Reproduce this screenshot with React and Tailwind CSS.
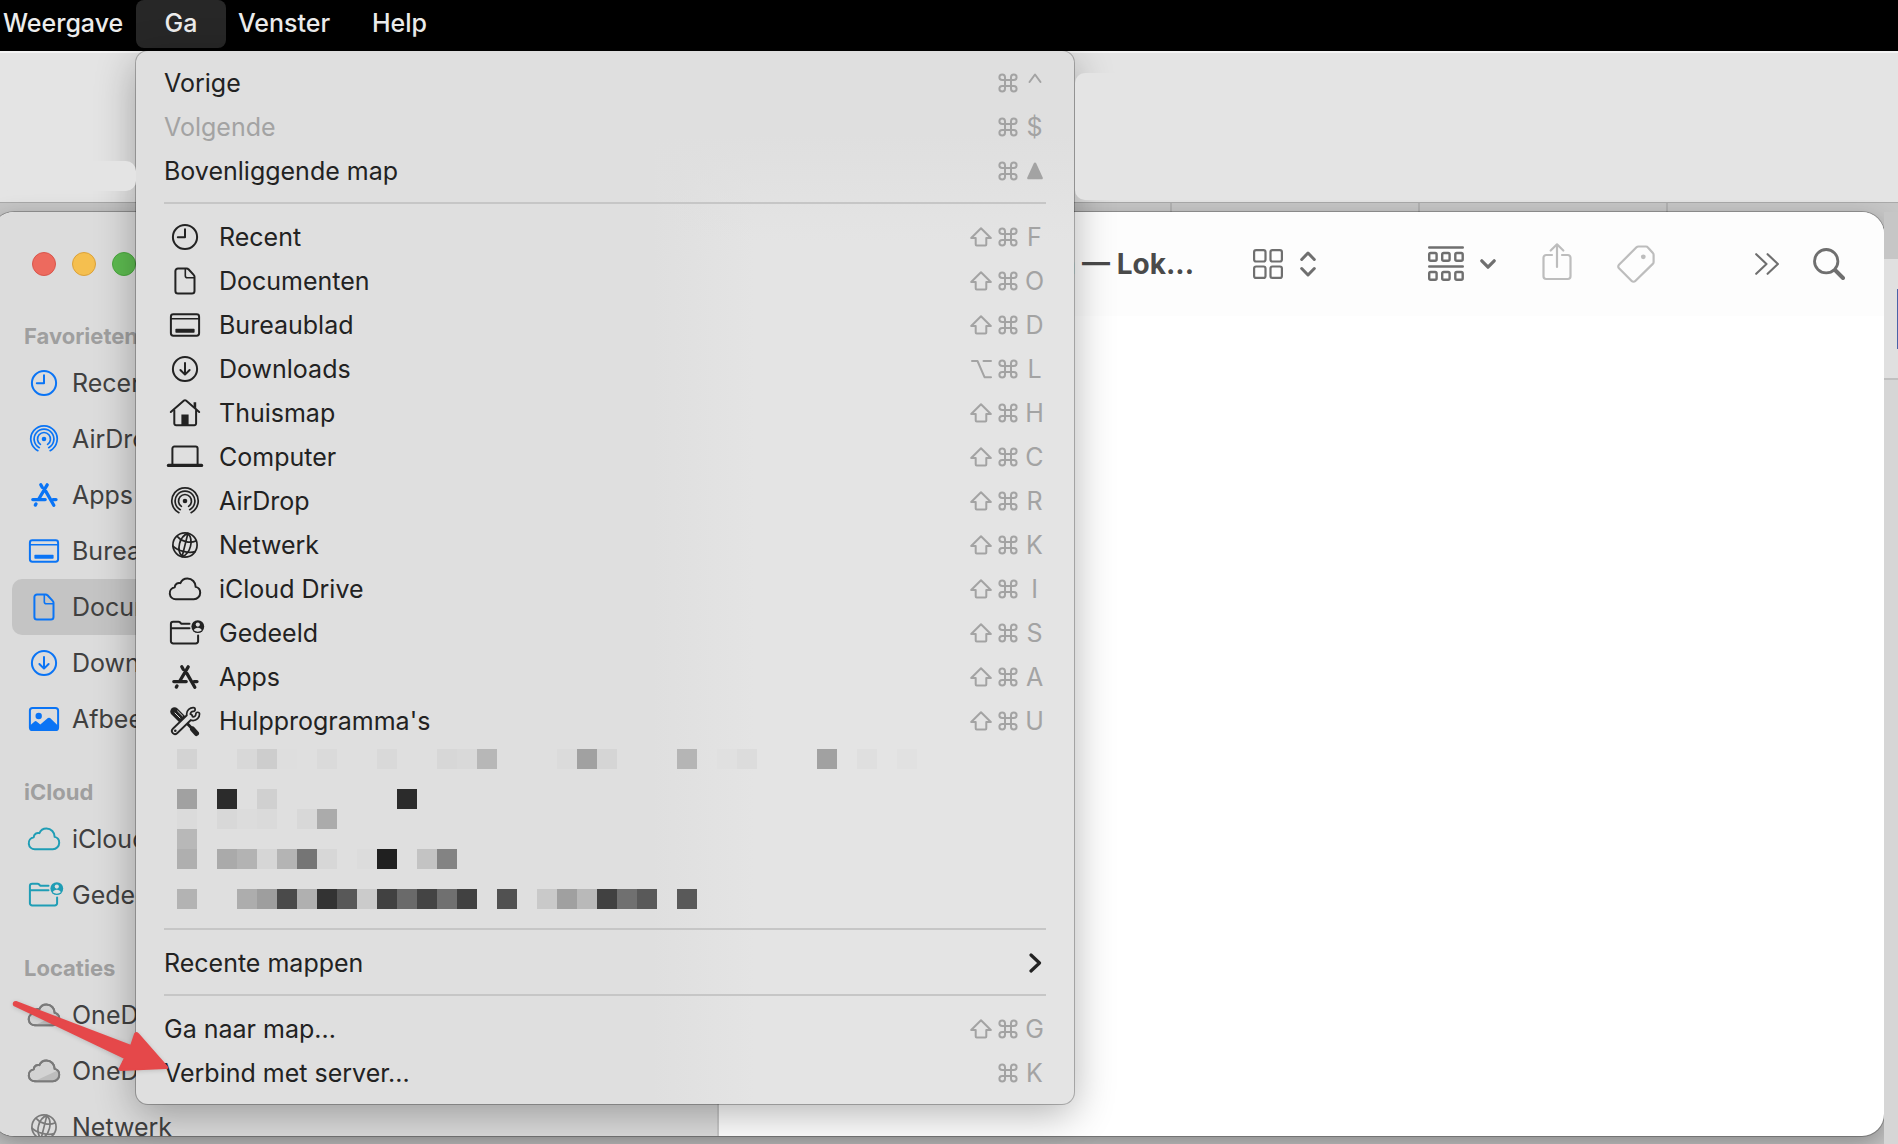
import React from "react"

const Glyph = ({ children, className = "" }) => (
  <svg
    viewBox="-5 0 42 32"
    className={`h-8 w-[42px] shrink-0 ${className}`}
    fill="none"
    stroke="currentColor"
    strokeWidth="2"
    strokeLinecap="round"
    strokeLinejoin="round"
    aria-hidden="true"
  >
    {children}
  </svg>
)

const cloudPath =
  "M7 26.2a6 6 0 0 1-1.3-11.9C5.8 11 9 9.2 11.4 10.2 12.6 7.4 15.2 5.6 18.4 5.6c4.8 0 8.2 3.6 8.3 8.3 2.6.6 4.5 2.9 4.5 5.8 0 3.6-2.8 6.5-6.4 6.5z"

const icons = {
  clock: (
    <>
      <circle cx="16" cy="16" r="12.1" />
      <path d="M16 8.3v8H8.8" />
    </>
  ),
  document: (
    <>
      <path d="M9 3.5h8.6c.8 0 1.4.2 1.9.8l5.2 5.6c.5.5.8 1.2.8 1.9V26a2.6 2.6 0 0 1-2.6 2.6H9A2.6 2.6 0 0 1 6.4 26V6.1A2.6 2.6 0 0 1 9 3.5z" />
      <path d="M16.3 4v6.7a2 2 0 0 0 2 2H25" strokeWidth="1.6" />
    </>
  ),
  desktop: (
    <>
      <rect x="1.9" y="5.3" width="28.2" height="21.4" rx="2.4" />
      <path d="M2 9.8h28" strokeWidth="1.5" />
      <rect x="6.4" y="19.8" width="19.2" height="4" rx="0.8" fill="currentColor" stroke="none" />
    </>
  ),
  download: (
    <>
      <circle cx="16" cy="16" r="12.1" />
      <path d="M16 10v11.4M11.4 17l4.6 4.6 4.6-4.6" />
    </>
  ),
  home: (
    <>
      <path d="M1.8 15 15 3.6c.6-.5 1.4-.5 2 0L30.2 15" />
      <path d="M5.3 13.5v13a1.8 1.8 0 0 0 1.8 1.8h18.2a1.8 1.8 0 0 0 1.8-1.8v-13" />
      <path d="M12.4 17.6h7.2V28h-7.2zM24.6 5.2h2.6v6.6l-2.6-2.3z" fill="currentColor" stroke="none" />
    </>
  ),
  laptop: (
    <>
      <path d="M3.4 23V7.6a2 2 0 0 1 2-2h21.2a2 2 0 0 1 2 2V23" />
      <rect x="-2.2" y="22.8" width="36.4" height="3.2" rx="1.5" fill="currentColor" stroke="none" />
    </>
  ),
  airdrop: (
    <g strokeWidth="1.7">
      <path d="M9.9 27.7a13.2 13.2 0 1 1 12.2 0" />
      <path d="M11.3 24.7a9.9 9.9 0 1 1 9.4 0" />
      <path d="M12.4 21.4a6.5 6.5 0 1 1 7.2 0" />
      <circle cx="16" cy="16" r="2.3" fill="currentColor" stroke="none" />
    </g>
  ),
  globe: (
    <g strokeWidth="1.7">
      <circle cx="16" cy="16" r="12.1" />
      <g transform="rotate(14 16 16)">
        <path d="M16 4v24M16 4C8.5 9 8.5 23 16 28M16 4c7.5 5 7.5 19 0 24" />
        <path d="M6.500 9.500c5 4 14 4 19 0M4.500 20c6 3.500 17 3.500 23 0" />
      </g>
    </g>
  ),
  cloud: <path d={cloudPath} />,
  onedrive: (
    <>
      <path d={cloudPath} fill="#d3d3d3" />
      <path d="M7 26 29.5 15.5c3 3 1.5 10-4.7 10.5z" fill="#bdbdbd" stroke="none" />
      <path d={cloudPath} />
    </>
  ),
  shared: (
    <>
      <path d="M20.5 6.8h-7.3c-.6 0-1-.2-1.4-.6l-.9-.9a2 2 0 0 0-1.4-.6H4.2A2.3 2.3 0 0 0 1.9 7v17.2a2.3 2.3 0 0 0 2.3 2.3h22.6a2.3 2.3 0 0 0 2.3-2.3v-5.7M2 11.3h18.5" />
      <circle cx="28.8" cy="9.6" r="6.4" fill="currentColor" stroke="none" />
      <circle cx="28.8" cy="7.6" r="2.1" fill="#dfdfdf" stroke="none" />
      <path d="M24.8 13.2c.8-3.4 7.2-3.4 8 0-2.2 1.9-5.800 1.900-8 0z" fill="#dfdfdf" stroke="none" />
    </>
  ),
  apps: (
    <g strokeWidth="3.3">
      <path d="M19.2 5.8 10.8 20M12.8 5.8l1.4 2.5M18 12.6l7.8 13.6" />
      <path d="M4.8 20.6h12.4M25 20.6h3M8 24.9l-.7 1.2" />
    </g>
  ),
  photo: (
    <>
      <rect x="1.9" y="5" width="28.2" height="22" rx="2.6" />
      <circle cx="10.7" cy="13" r="3.2" fill="currentColor" stroke="none" />
      <path d="M2 22.5 6.6 18.5q1-.8 2 0l3.7 3 7.6-6.4q1.1-.9 2.2 0l8 7.600V27H2z" fill="currentColor" stroke="none" />
    </>
  ),
  tools: (
    <>
      <path d="m5.5 6.5 7 7" strokeWidth="8.5" />
      <path d="M12 12l12 12.5" strokeWidth="3" />
      <path d="m23.5 24 4 4.5" strokeWidth="5" />
      <path d="m6 8 5 5M8.600 6l5 5" stroke="#dfdfdf" strokeWidth="1" />
      <path d="M24.3 4.5a4.6 4.6 0 1 0 4.4 4.6" strokeWidth="5.4" />
      <path d="M20.5 12 6 26" strokeWidth="8" />
      <path d="M24.3 4.5a4.6 4.6 0 1 0 4.4 4.6" stroke="#dfdfdf" strokeWidth="2" />
      <path d="M20.5 12 6 26" stroke="#dfdfdf" strokeWidth="4.4" />
      <circle cx="6.3" cy="25.7" r="1.3" fill="currentColor" stroke="none" />
    </>
  ),
}

const keyIcons = {
  cmd: (
    <svg viewBox="0 0 20 20" className="h-5 w-5" fill="none" stroke="currentColor" strokeWidth="2">
      <path d="M7 7h6v6H7zM7 7H4.2A2.8 2.8 0 1 1 7 4.2zM13 7V4.2A2.8 2.8 0 1 1 15.8 7zM13 13h2.8a2.8 2.8 0 1 1-2.8 2.8zM7 13v2.8A2.8 2.8 0 1 1 4.2 13z" />
    </svg>
  ),
  shift: (
    <svg viewBox="0 0 22 20" className="h-5 w-[22px]" fill="none" stroke="currentColor" strokeWidth="2" strokeLinejoin="round">
      <path d="M11 1.2 20.8 11h-4.5v6.5a1 1 0 0 1-1 1H6.700a1 1 0 0 1-1-1V11H1.200z" />
    </svg>
  ),
  option: (
    <svg viewBox="0 0 22 20" className="h-5 w-[22px]" fill="none" stroke="currentColor" strokeWidth="2" strokeLinecap="round" strokeLinejoin="round">
      <path d="M2 2h5.5l7 16.2H21M13.5 2H21" />
    </svg>
  ),
  up: (
    <svg viewBox="0 0 16 18" className="h-[18px] w-4" fill="currentColor">
      <path d="M6.8 1.3a1.3 1.3 0 0 1 2.4 0l6.5 14.2a1.2 1.2 0 0 1-1.1 1.8H1.4a1.2 1.2 0 0 1-1.1-1.8z" />
    </svg>
  ),
  "^": (
    <svg viewBox="0 0 16 20" className="h-5 w-4" fill="none" stroke="currentColor" strokeWidth="2" strokeLinecap="round" strokeLinejoin="round">
      <path d="M2.500 9 8 1.500 13.500 9" />
    </svg>
  ),
}

const historyItems = [
  { label: "Vorige", keys: ["cmd", "^"] },
  { label: "Volgende", keys: ["cmd", "$"], disabled: true },
  { label: "Bovenliggende map", keys: ["cmd", "up"] },
]

const placeItems = [
  { label: "Recent", icon: "clock", keys: ["shift", "cmd", "F"] },
  { label: "Documenten", icon: "document", keys: ["shift", "cmd", "O"] },
  { label: "Bureaublad", icon: "desktop", keys: ["shift", "cmd", "D"] },
  { label: "Downloads", icon: "download", keys: ["option", "cmd", "L"] },
  { label: "Thuismap", icon: "home", keys: ["shift", "cmd", "H"] },
  { label: "Computer", icon: "laptop", keys: ["shift", "cmd", "C"] },
  { label: "AirDrop", icon: "airdrop", keys: ["shift", "cmd", "R"] },
  { label: "Netwerk", icon: "globe", keys: ["shift", "cmd", "K"] },
  { label: "iCloud Drive", icon: "cloud", keys: ["shift", "cmd", "I"] },
  { label: "Gedeeld", icon: "shared", keys: ["shift", "cmd", "S"] },
  { label: "Apps", icon: "apps", keys: ["shift", "cmd", "A"] },
  { label: "Hulpprogramma's", icon: "tools", keys: ["shift", "cmd", "U"] },
]

const connectItems = [
  { label: "Ga naar map...", keys: ["shift", "cmd", "G"] },
  { label: "Verbind met server...", keys: ["cmd", "K"] },
]

const sidebarGroups = [
  {
    title: "Favorieten",
    color: "text-[#0a74f5]",
    items: [
      { label: "Recent", icon: "clock" },
      { label: "AirDrop", icon: "airdrop" },
      { label: "Apps", icon: "apps" },
      { label: "Bureaublad", icon: "desktop" },
      { label: "Documenten", icon: "document", selected: true },
      { label: "Downloads", icon: "download" },
      { label: "Afbeeldingen", icon: "photo" },
    ],
  },
  {
    title: "iCloud",
    color: "text-[#1f9db5]",
    items: [
      { label: "iCloud Drive", icon: "cloud" },
      { label: "Gedeeld", icon: "shared" },
    ],
  },
  {
    title: "Locaties",
    color: "text-[#7a7a7a]",
    items: [
      { label: "OneDrive", icon: "onedrive" },
      { label: "OneDrive", icon: "onedrive" },
      { label: "Netwerk", icon: "globe" },
    ],
  },
]

// [column, grey level] for each row of the pixelated block
const mosaicRows = [
  [[1, "d3"], [4, "d8"], [5, "cd"], [6, "de"], [8, "da"], [11, "d9"], [14, "d7"], [15, "d9"], [16, "b7"], [17, "df"], [20, "db"], [21, "a1"], [22, "d5"], [26, "b5"], [28, "e0"], [29, "dc"], [33, "a1"], [35, "df"], [37, "e1"]],
  [],
  [[1, "a1"], [3, "2b"], [5, "d0"], [12, "2b"]],
  [[1, "db"], [3, "d8"], [4, "dc"], [5, "da"], [7, "d8"], [8, "ab"]],
  [[1, "b8"]],
  [[1, "af"], [3, "aa"], [4, "b3"], [5, "d6"], [6, "b4"], [7, "75"], [8, "d7"], [10, "dc"], [11, "20"], [13, "c3"], [14, "83"]],
  [],
  [[1, "b3"], [4, "ad"], [5, "9e"], [6, "4a"], [7, "b0"], [8, "33"], [9, "58"], [10, "cb"], [11, "41"], [12, "6a"], [13, "44"], [14, "70"], [15, "41"], [17, "51"], [19, "c9"], [20, "a0"], [21, "b9"], [22, "41"], [23, "70"], [24, "59"], [26, "59"]],
]

const MenuItem = ({ label, icon, keys, disabled, children }) => (
  <button
    type="button"
    role="menuitem"
    disabled={disabled}
    className={`flex h-11 w-full items-center pr-[26px] pl-7 text-left ${
      disabled ? "text-[#a3a3a3]" : "text-[#222222]"
    }`}
  >
    {icon && <Glyph className="mr-[13px]">{icons[icon]}</Glyph>}
    <span className="flex-1">{label}</span>
    {keys && (
      <span className="flex text-[#a3a3a3]">
        {keys.map((key) => (
          <kbd
            key={key}
            className="flex w-[27px] items-center justify-center font-['Inter',sans-serif]"
          >
            {keyIcons[key] || key}
          </kbd>
        ))}
      </span>
    )}
    {children}
  </button>
)

const Separator = () => (
  <div role="separator" className="mx-7 h-[22px] pt-[9px]">
    <div className="h-0.5 bg-[#c6c6c6]"></div>
  </div>
)

const Mosaic = () => (
  <div className="h-44 pt-1.5 pl-[41px]">
    {mosaicRows.map((row, i) => (
      <div key={i} className="grid h-5 grid-cols-[repeat(40,20px)]">
        {row.map(([column, grey]) => (
          <div
            key={column}
            style={{
              gridColumnStart: column,
              backgroundColor: `#${grey}${grey}${grey}`,
            }}
          ></div>
        ))}
      </div>
    ))}
  </div>
)

const GoMenu = () => (
  <div
    role="menu"
    aria-label="Ga"
    className="absolute top-[51px] left-[136px] z-10 w-[938px] rounded-xl bg-[#e4e4e4] bg-[linear-gradient(to_bottom,#dfdfdf_8%,transparent_18%),linear-gradient(to_right,#dfdfdf_55%,#e4e4e4_66%)] pt-2.5 pb-[9px] shadow-[0_0_0_1px_rgba(0,0,0,0.25),0_10px_40px_rgba(0,0,0,0.3)]"
  >
    {historyItems.map((item) => (
      <MenuItem key={item.label} {...item} />
    ))}
    <Separator />
    {placeItems.map((item) => (
      <MenuItem key={item.label} {...item} />
    ))}
    <Mosaic />
    <Separator />
    <MenuItem label="Recente mappen">
      <svg viewBox="0 0 16 20" className="mr-[5px] h-5 w-4" fill="none" stroke="currentColor" strokeWidth="3.2" strokeLinecap="round" strokeLinejoin="round" aria-hidden="true">
        <path d="m4 2 8.500 8L4 18" />
      </svg>
    </MenuItem>
    <Separator />
    {connectItems.map((item) => (
      <MenuItem key={item.label} {...item} />
    ))}
  </div>
)

const Sidebar = () => (
  <aside className="w-[727px] shrink-0 border-r-2 border-[#c8c8c8] bg-[#dcdcdc] pl-5">
    <div className="flex h-[79px] gap-4 pt-10 pl-5">
      <button type="button" aria-label="Sluit" className="h-6 w-6 rounded-full border border-[#d8564c] bg-[#ed6a5e]"></button>
      <button type="button" aria-label="Minimaliseer" className="h-6 w-6 rounded-full border border-[#dba13a] bg-[#f5bf4f]"></button>
      <button type="button" aria-label="Vergroot" className="h-6 w-6 rounded-full border border-[#4aa73e] bg-[#5dbb50]"></button>
    </div>
    {sidebarGroups.map((group) => (
      <section key={group.title}>
        <h2 className="h-16 pt-[30px] pl-3 text-[22px] leading-[30px] font-bold text-[#9f9f9f]">
          {group.title}
        </h2>
        {group.items.map((item, i) => (
          <button
            key={i}
            type="button"
            className={`flex h-14 w-[693px] items-center rounded-[10px] pl-[11px] text-[#404040] ${
              item.selected ? "bg-[#c4c4c4]" : ""
            }`}
          >
            <Glyph className={`mr-[7px] ${group.color}`}>{icons[item.icon]}</Glyph>
            {item.label}
          </button>
        ))}
      </section>
    ))}
  </aside>
)

const Toolbar = () => (
  <div className="flex h-[104px] items-center justify-end bg-[#fdfdfd] pr-[39px] text-[#6f6f6f]">
    <h1 className="mr-[59px] text-[28px] font-bold whitespace-nowrap text-[#4a4a4a]">
      n — Lok...
    </h1>
    <button type="button" aria-label="Weergave als symbolen" className="mr-28 flex items-center gap-[17px]">
      <svg viewBox="0 0 30 30" className="h-[30px] w-[30px]" fill="none" stroke="currentColor" strokeWidth="2.2">
        <rect x="1.1" y="1.1" width="11.4" height="11.4" rx="2" />
        <rect x="17.5" y="1.1" width="11.4" height="11.4" rx="2" />
        <rect x="1.1" y="17.5" width="11.4" height="11.4" rx="2" />
        <rect x="17.5" y="17.5" width="11.4" height="11.4" rx="2" />
      </svg>
      <svg viewBox="0 0 16 26" className="h-[26px] w-4" fill="none" stroke="currentColor" strokeWidth="3" strokeLinecap="round" strokeLinejoin="round">
        <path d="m1.7 8.5 6.3-6.5 6.3 6.5M1.7 17.5l6.3 6.5 6.3-6.5" />
      </svg>
    </button>
    <button type="button" aria-label="Groepeer" className="mr-[46px] flex items-center gap-4">
      <svg viewBox="0 0 36 36" className="h-9 w-9" fill="none" stroke="currentColor" strokeWidth="2.4" strokeLinecap="round">
        <path d="M1.2 1.5h33.6M1.2 20.5h33.6" />
        <rect x="1.2" y="7" width="7.4" height="7.8" rx="1.5" />
        <rect x="14.2" y="7" width="7.4" height="7.8" rx="1.5" />
        <rect x="27.3" y="7" width="7.4" height="7.8" rx="1.5" />
        <rect x="1.2" y="26" width="7.4" height="7.8" rx="1.5" />
        <rect x="14.2" y="26" width="7.4" height="7.8" rx="1.5" />
        <rect x="27.3" y="26" width="7.4" height="7.8" rx="1.5" />
      </svg>
      <svg viewBox="0 0 16 10" className="h-2.5 w-4" fill="none" stroke="currentColor" strokeWidth="3.2" strokeLinecap="round" strokeLinejoin="round">
        <path d="M1.8 1.8 8 8.2l6.2-6.4" />
      </svg>
    </button>
    <button type="button" aria-label="Deel" className="mr-[45px] text-[#bdbdbd]">
      <svg viewBox="0 0 30 38" className="mb-1 h-[38px] w-[30px]" fill="none" stroke="currentColor" strokeWidth="2.2" strokeLinecap="round" strokeLinejoin="round">
        <path d="M10 12H4.2A2.7 2.7 0 0 0 1.5 14.7v18.6A2.7 2.7 0 0 0 4.2 36h21.6a2.7 2.7 0 0 0 2.7-2.7V14.7A2.7 2.7 0 0 0 25.8 12H20" />
        <path d="M15 24V1.5M8.7 7.5 15 1.3l6.3 6.2" />
      </svg>
    </button>
    <button type="button" aria-label="Tags" className="mr-[100px] text-[#bdbdbd]">
      <svg viewBox="0 0 38 38" className="h-[38px] w-[38px]" fill="none" stroke="currentColor" strokeWidth="2.2" strokeLinejoin="round">
        <path d="M21.5 1.5h7.4c.8 0 1.5.3 2 .9l5 5.6c.5.5.7 1.2.7 1.9v7c0 .8-.3 1.4-.8 2L18.3 36a2.5 2.5 0 0 1-3.6 0L2 23.3a2.5 2.5 0 0 1 0-3.6L19.5 2.3c.5-.5 1.2-.8 2-.8z" />
        <circle cx="26.3" cy="11.8" r="2.4" fill="currentColor" stroke="none" />
      </svg>
    </button>
    <button type="button" aria-label="Meer" className="mr-[34px]">
      <svg viewBox="0 0 24 22" className="h-[22px] w-6" fill="none" stroke="currentColor" strokeWidth="2.1" strokeLinecap="round" strokeLinejoin="round">
        <path d="m1.2 1.2 10.3 9.8L1.2 20.8M12.6 1.2 22.9 11l-10.3 9.8" />
      </svg>
    </button>
    <button type="button" aria-label="Zoek">
      <svg viewBox="0 0 32 32" className="h-8 w-8" fill="none" stroke="currentColor" strokeWidth="2.8" strokeLinecap="round">
        <circle cx="13.2" cy="13.2" r="11.7" />
        <path d="m22.5 22.5 7.5 7.5" strokeWidth="4" />
      </svg>
    </button>
  </div>
)

const App = () => {
  return (
    <div className="relative flex h-screen flex-col overflow-hidden bg-[#c6c6c6] font-['Inter',sans-serif] text-[25px] leading-8">
      {/* Menu bar */}
      <nav className="flex h-[51px] shrink-0 items-start bg-black font-medium text-[#ececec]">
        <button type="button" className="h-12 w-[136px] pb-0.5 pl-[3px] text-left">
          Weergave
        </button>
        <button type="button" className="h-12 w-[90px] rounded-lg bg-[#272727] pb-0.5">
          Ga
        </button>
        <button type="button" className="h-12 w-[134px] pb-0.5 pl-3 text-left">
          Venster
        </button>
        <button type="button" className="h-12 pb-0.5 pl-3">
          Help
        </button>
      </nav>

      {/* Window behind the Finder */}
      <div className="h-[152px] shrink-0 border-t-2 border-b border-t-[#f4f4f4] border-b-[#a9a9a9] bg-[#e4e4e4]"></div>
      <div className="flex h-[9px] shrink-0 justify-end">
        <div className="w-[248px] border-l-2 border-[#b2b2b2]"></div>
        <div className="w-[248px] border-l-2 border-[#b2b2b2]"></div>
        <div className="w-[232px] border-l-2 border-[#b2b2b2]"></div>
      </div>

      {/* Finder window */}
      <div className="flex min-h-0 flex-1">
        <main className="mb-2 -ml-2 flex min-w-0 flex-1 overflow-hidden rounded-[22px] bg-white shadow-[0_0_0_1px_rgba(0,0,0,0.25),0_8px_24px_rgba(0,0,0,0.3)]">
          <Sidebar />
          <div className="min-w-0 flex-1">
            <Toolbar />
          </div>
        </main>
        <div className="flex w-3.5 flex-col bg-[#d6d6d6]">
          <div className="h-[47px] bg-[#c6c6c6]"></div>
          <div className="flex h-[121px] items-center justify-end border-b-2 border-[#c0c0c0] bg-[#e0e0e0]">
            <div className="h-[60px] w-px bg-[#4a63a8]"></div>
          </div>
        </div>
      </div>

      <GoMenu />

      <div className="absolute top-[161px] left-0 z-20 h-[30px] w-[136px] rounded-[10px] bg-[#e4e4e4]"></div>
      <div className="absolute top-[73px] right-0 left-[1075px] z-20 h-[127px] rounded-l-[10px] bg-[#e4e4e4]"></div>

      {/* Arrow pointing at the last menu item */}
      <svg
        viewBox="0 0 160 44"
        className="absolute top-[1030px] left-2.5 z-30 h-11 w-40 overflow-visible drop-shadow-sm"
        fill="#e5484a"
        stroke="#e5484a"
        strokeWidth="2"
        strokeLinejoin="round"
        aria-hidden="true"
      >
        <path d="M6-28 121 16l4-12q1-2 3 0l29 33q1 1-1 1l-45 2q-3 0-1-2l5-10L4-25q-1-3 2-3z" />
      </svg>
    </div>
  )
}

export default App
